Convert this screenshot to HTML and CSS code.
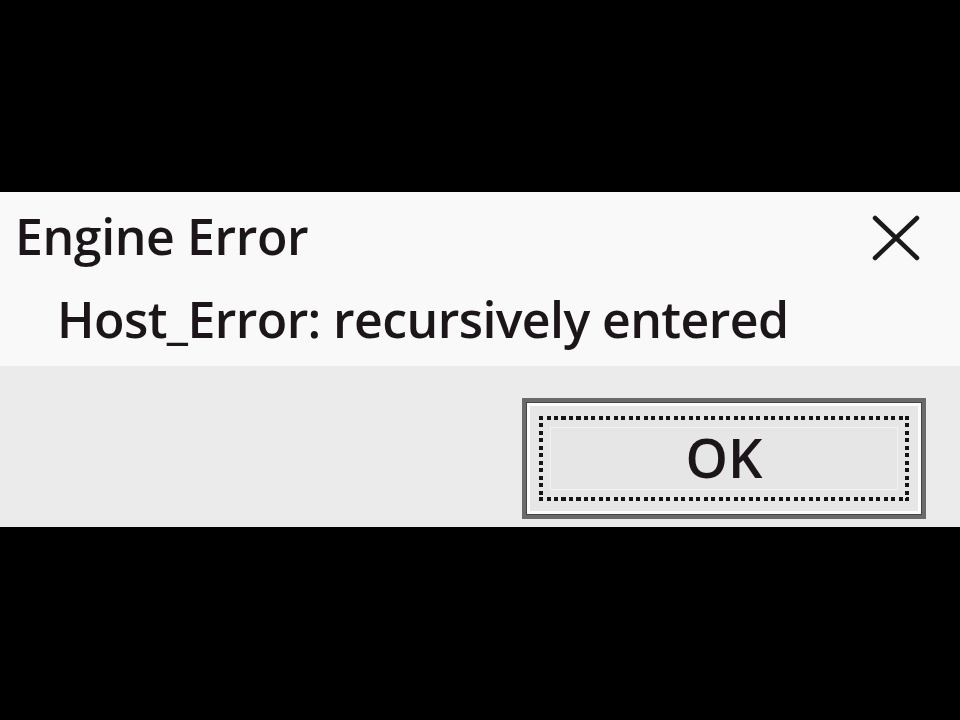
FILE: index.html
```html
<!DOCTYPE html>
<html lang="en">
<head>
<meta charset="utf-8">
<title>Engine Error</title>
<link rel="stylesheet" href="styles.css">
</head>
<body>
<div class="screen">
  <div class="dialog">
    <div class="main">
      <div class="titlerow">
        <div class="title">Engine Error</div>
        <svg class="close" width="48" height="46" viewBox="0 0 48 46" aria-label="Close">
          <path d="M3 3 L45 43 M45 3 L3 43" />
        </svg>
      </div>
      <div class="message">Host_Error: recursively entered</div>
    </div>
    <div class="footer">
      <button class="ok" type="button"><span class="focus"><span class="label">OK</span></span></button>
    </div>
  </div>
</div>
</body>
</html>
```
FILE: styles.css
```css
html, body {
  margin: 0;
  padding: 0;
  background: #000;
}
.screen {
  width: 960px;
  height: 720px;
  padding-top: 192px;
  box-sizing: border-box;
  background: #000;
}
.dialog {
  width: 960px;
  font-family: "Open Sans", "Noto Sans", sans-serif;
  font-weight: 600;
  color: #1c161a;
}
.main {
  background: #f9f9f9;
  height: 174px;
  box-sizing: border-box;
  padding-top: 10px;
}
.titlerow {
  display: flex;
  justify-content: space-between;
  align-items: flex-start;
  padding: 0 40px 0 15px;
}
.title {
  font-size: 50px;
  line-height: 68px;
  letter-spacing: -0.4px;
}
.close {
  margin-top: 13px;
  display: block;
}
.close path {
  stroke: #1a1a1a;
  stroke-width: 4.5;
  stroke-linecap: round;
  fill: none;
}
.message {
  font-size: 50px;
  line-height: 68px;
  letter-spacing: -0.6px;
  padding: 15px 0 0 57px;
}
.footer {
  background: #ebebeb;
  height: 161px;
  box-sizing: border-box;
  padding: 32px 34px 0 0;
  display: flex;
  justify-content: flex-end;
  align-items: flex-start;
}
.ok {
  width: 404px;
  height: 121px;
  box-sizing: border-box;
  margin: 0;
  padding: 0;
  border: 4px solid #6a6a6a;
  background: #e6e6e6;
  box-shadow: inset 0 0 0 1px #444, inset 0 0 0 4px #fbfbfb;
  display: flex;
  align-items: center;
  justify-content: center;
  font-family: "Open Sans", "Noto Sans", sans-serif;
  font-weight: 600;
  color: #1c161a;
}
.focus {
  width: 370px;
  height: 85px;
  box-sizing: border-box;
  padding: 4px;
  display: flex;
  background:
    repeating-linear-gradient(90deg, #141414 0 4px, transparent 4px 7.5px) top left / 100% 4px no-repeat,
    repeating-linear-gradient(90deg, #141414 0 4px, transparent 4px 7.5px) bottom left / 100% 4px no-repeat,
    repeating-linear-gradient(180deg, #141414 0 4px, transparent 4px 7.5px) top left / 4px 100% no-repeat,
    repeating-linear-gradient(180deg, #141414 0 4px, transparent 4px 7.5px) top right / 4px 100% no-repeat;
}
.label {
  flex: 1;
  display: flex;
  align-items: center;
  justify-content: center;
  border: 1px solid #f3f3f3;
  margin: 7px;
  padding-bottom: 4px;
  font-size: 54px;
  line-height: 60px;
}
```
